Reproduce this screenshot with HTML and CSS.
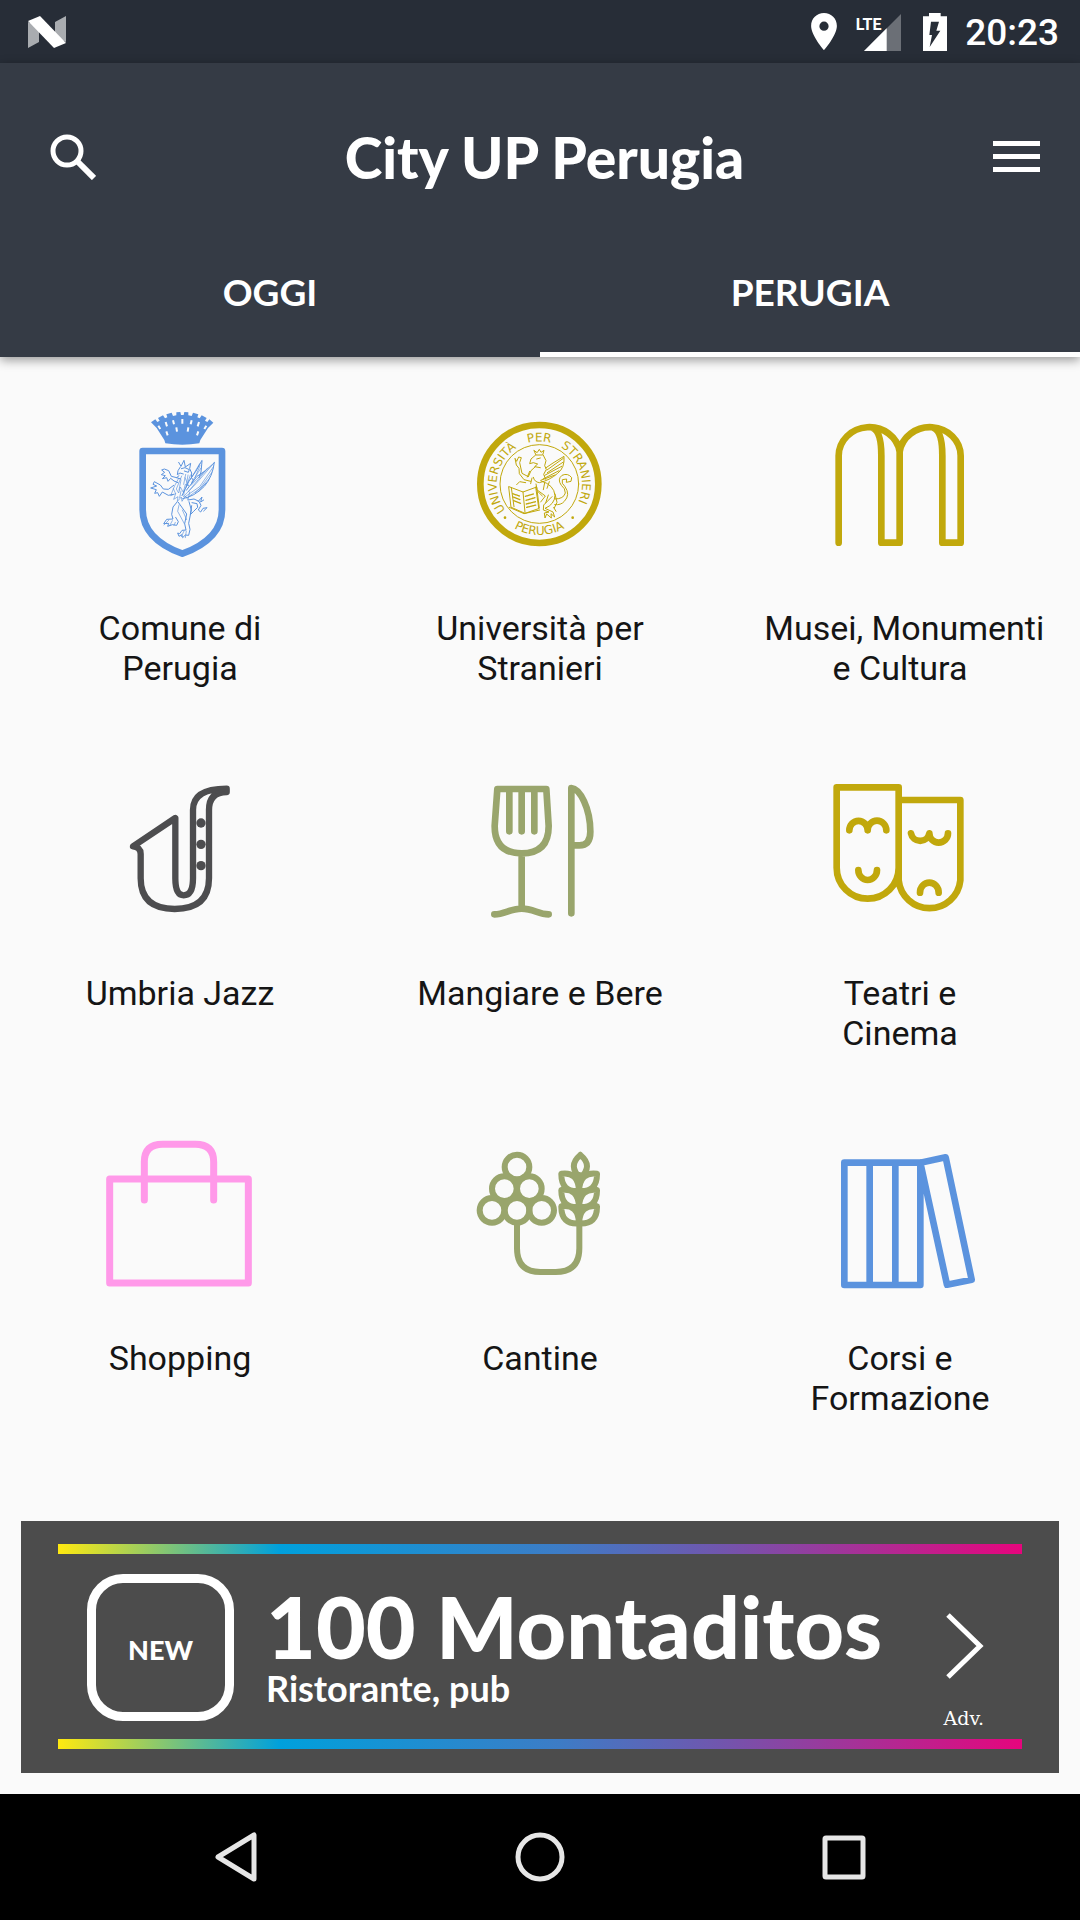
FILE: index.html
```html
<!DOCTYPE html>
<html lang="it">
<head>
<meta charset="utf-8">
<meta name="viewport" content="width=device-width, initial-scale=1">
<title>City UP Perugia</title>
<link rel="stylesheet" href="styles.css">
</head>
<body>
<div class="status">
  <svg class="status-logo" viewBox="0 0 38 32" width="38" height="32" aria-hidden="true">
    <path d="M0 6v26l11-6V10zM38 0v26l-11-5V6z" fill="#a9acb0"/>
    <path d="M0 5 12 0 38 27 26 32z" fill="#fff"/>
  </svg>
  <div class="status-right">
    <svg viewBox="90 39 78 112" width="26" height="37" aria-hidden="true">
      <path fill="#fff" fill-rule="evenodd" d="M129 39c-22 0-39 17-39 39 0 29 39 73 39 73s39-44 39-73c0-22-17-39-39-39zm0 26a14 14 0 1 1 0 28 14 14 0 0 1 0-28z"/>
    </svg>
    <svg class="signal" viewBox="225 36 138 114" width="46" height="38" aria-label="LTE">
      <path d="M360 39v111H249z" fill="#6b6f76"/>
      <path d="M317 82v68H249z" fill="#fff"/>
      <path d="M225 36h73v54h-73z" fill="#272d37"/>
      <text x="224" y="86" class="lte">LTE</text>
    </svg>
    <svg class="battery" viewBox="426 36 72 114" width="24" height="38" aria-hidden="true">
      <path d="M426 46h18V36h35v10h19v104h-72z" fill="#fff"/>
      <path d="M450 62h24l-8 27h12l-32 49 7-36h-8z" fill="#272d37"/>
    </svg>
    <time>20:23</time>
  </div>
</div>

<header class="header">
  <div class="toolbar">
    <button class="icon-button" aria-label="Cerca">
      <svg viewBox="0 0 46 46" width="46" height="46"><circle cx="17" cy="17" r="14" fill="none" stroke="#fff" stroke-width="5"/><path d="M27 27 44 44" fill="none" stroke="#fff" stroke-width="6"/></svg>
    </button>
    <h1>City UP Perugia</h1>
    <button class="icon-button" aria-label="Menu">
      <svg viewBox="0 0 47 32" width="47" height="32"><path d="M0 0h47v5H0zM0 13h47v5H0zM0 26h47v5H0z" fill="#fff"/></svg>
    </button>
  </div>
  <nav class="tabs">
    <a class="tab" href="#oggi">OGGI</a>
    <a class="tab tab-active" href="#perugia" aria-current="page">PERUGIA</a>
  </nav>
</header>

<main>
  <div class="grid">
    <a class="item blue" href="#comune">
      <svg class="icon" viewBox="-90 -21 540 540">
        <path class="fill" d="M93 67L106 58L112 66L119 62L114 54L129 46L135 55L142 52L139 43L155 38L159 48L169 46V37L181 36L183 45H191L193 36L205 37V46L215 48L219 38L235 43L232 52L239 55L245 46L260 54L255 62L262 66L268 58L280 68L264 84L241 120L238 130Q187 138 136 130L133 120L110 84Z"/>
        <path d="M115 77l6 10M137 66l4 13M159 61l3 12M187 57v14M215 61l-3 12M237 66l-4 13M259 77l-6 10M139 94l4 12M169 82l2 13M205 82l-2 13M235 94l-4 12" fill="none" stroke="#fafafa" stroke-width="6"/>
        <path class="line" stroke-width="20" d="M68 153H306V329Q306 417 187 461Q68 417 68 329Z"/>
        <g class="line" stroke-width="2">
          <path stroke-width="3" d="M176 187l7 12 9-18 4 20 16-11-3 16 6 13-1 13 6 9-4 8M181 201l-7 11-2 12 8-5 10 3M177 227l-7 6 12 4M184 206l11-3 13 6-3 8-12-4"/>
          <path stroke-width="3" d="M246 181q-17 34-39 62l-21 44M283 187q-5 43-30 72-30 31-65 37M282 189q-25 26-51 40l-32 42M246 184l-3 32-6 17"/>
          <path d="M276 196l-48 55-38 39M279 202l-40 58-45 31M275 218l-35 47-34 25M268 236l-32 38M258 249l-32 29M263 204l-50 52M256 213l-51 62M240 197l-15 36M243 204l-28 43M239 191l-28 48"/>
          <path stroke-width="3" d="M170 233l-16-4-8-17-13-5-8 3 9 7-10 7 12 3-9 9 13-3 4 11 8-9 10 8 12 5M161 256l-16 12-15-1-9-12-18-10-4 8 11 5-18 6 17 5-5 11 9-2 5 11 9-13 18 10 15-3"/>
          <path d="M176 235l-12 22-12 30 15-6-6 17 13-8-2 14 12-13 2 13 10-16 8 11 5-23M185 228l-16 39 7 12 5-18 9 16 6-24 10 5-11-25M197 223l-6 30M204 225l-6 37M183 240l-6 30M211 225l-12 36M160 266l7 15M183 273l-4 20M194 269l-3 16"/>
          <path stroke-width="3" d="M172 305l-13 16-4 22 4 14-19 1-9 13 15-1-3 9 14-5 13 2 5-11-8-13M175 307l25 35-6 29 4 19-12 1-7 10-6-2 4 10 8-5 3 9 8-8 10 1 4-18-4-18 8-40-7-25"/>
          <path d="M177 315l-4 19 20 37M187 330l13 29M192 393l-8 17M199 393l-3 20M146 361l-14 14M157 362l-8 15M166 367l-4 9"/>
          <path stroke-width="3" d="M204 300l18-3 15 7 6 12-8 14 7 6 7-11 12-2-10 10M216 308l15 3 2 11-12 12-10 10 4-27M235 304l11-13-4 15 9-6"/>
        </g>
      </svg>
      <span class="label">Comune di<br>Perugia</span>
    </a>
    <a class="item gold" href="#universita">
      <svg class="icon" viewBox="-45 -51 540 540">
        <defs>
          <path id="arc-top" d="M138 318A128 128 0 1 1 308 318"/>
          <path id="arc-bottom" d="M94 304A153 153 0 0 0 352 304"/>
        </defs>
        <circle class="line" cx="223" cy="222" r="177" stroke-width="20"/>
        <circle class="line" cx="223" cy="222" r="118" stroke-width="3"/>
        <text class="seal"><textPath href="#arc-top" startOffset="23">UNIVERSITÀ</textPath></text>
        <text class="seal"><textPath href="#arc-top" startOffset="274">PER</textPath></text>
        <text class="seal"><textPath href="#arc-top" startOffset="376">STRANIERI</textPath></text>
        <text class="seal"><textPath href="#arc-bottom" startOffset="50%" text-anchor="middle">PERUGIA</textPath></text>
        <circle class="fill" cx="120" cy="323" r="4"/><circle class="fill" cx="323" cy="323" r="4"/>
        <g class="line" stroke-width="3">
          <path d="M207 122l6 13h20l4-14-9 6-5-9-6 9zM212 135l-14 12-4 14 11-3 13 4-9 8 17 3M235 136l8 16-4 15 5 11-8 15 6 15M215 147l11-3M211 170l-13 12-8 18"/>
          <path d="M242 174l22-15 33-20q3 34-19 51-24 21-55 28-15-2-18-16M295 145l-49 35M295 156l-48 32M290 169l-51 27M282 182l-48 25M270 195l-43 16"/>
          <path d="M188 199l-17-9-7-32 5-15-8-2-6 13-5-9 4 20 8 10 1 16 14 18 20 5M182 218l-18-3-9 9M201 204l-4 17M213 222l3 15M194 184l-7 17"/>
          <path d="M132 230l42 16 41-15 8 64-43 15-41-18zM174 246l6 61M139 233l8 57M133 292l44 19 47-11M212 231l9 62"/>
          <path d="M143 251l20 7M144 261l21 8M146 272l21 8M181 259l24-7M183 271l27-8M184 282l28-7M185 292l28-7" stroke-width="4" stroke-dasharray="4 2"/>
          <path d="M229 213q38 12 41 43-1 27-30 39l24 11 5 15-11-10 1 13-14-12-5 12-2-15 14-3-17-6 1-15 25-25M214 238l27 20-14 18M253 215l-7 20M239 218l-4 21M270 252l6 25-8 17M218 244l14 14M250 255l-8 24M266 292l7 12"/>
          <path d="M270 267q26 0 31-18 0-14-12-23-13-18 2-30 18-8 29 7l-2 11-14 3 1-10-13 2q-4 11 8 21 17 24-2 44-10 12-29 10"/>
        </g>
      </svg>
      <span class="label">Università per<br>Stranieri</span>
    </a>
    <a class="item gold" href="#musei">
      <svg class="icon" viewBox="-30 -51 540 540">
        <path class="line" stroke-width="20" d="M56 398V137A92 86 0 0 1 239 125A92 86 0 0 1 422 137V398H367V137Q367 62 339 53M239 121V398H184V137Q184 62 156 53"/>
      </svg>
      <span class="label">&nbsp;Musei, Monumenti<br>e Cultura</span>
    </a>
    <a class="item dark" href="#jazz">
      <svg class="icon" viewBox="-90 -36 540 540">
        <path class="line" stroke-width="19" d="M39 229L166 144V325Q166 376 191 376Q219 376 219 325V120Q219 56 320 56V66Q267 66 267 120V325Q267 417 164 417Q62 417 62 325V252Q62 231 39 229Z"/>
        <path class="line" stroke-width="9" d="M290 67q10-5 21-6"/>
        <g class="fill"><circle cx="243" cy="159" r="14"/><circle cx="243" cy="223" r="14"/><circle cx="243" cy="287" r="14"/></g>
      </svg>
      <span class="label">Umbria Jazz</span>
    </a>
    <a class="item olive" href="#mangiare">
      <svg class="icon" viewBox="-90 -36 540 540">
        <path class="line" stroke-width="20" d="M52 57H199L206 168Q206 250 125 250Q44 250 44 168ZM88 57V184M125 57V184M163 57V184M125 250V415M43 433C75 433 90 416 125 416S175 433 206 433M274 430V54C300 56 331 115 331 185Q331 226 298 226H274"/>
      </svg>
      <span class="label">Mangiare e Bere</span>
    </a>
    <a class="item gold" href="#teatri">
      <svg class="icon" viewBox="-30 -36 540 540">
        <path class="line" stroke-width="20" d="M50 52H236V293A93 93 0 0 1 50 293ZM236 90H421V331A93 93 0 0 1 236 331V290M88 181A27 28 0 0 1 143 181A27 28 0 0 1 199 181M115 300A28 30 0 0 0 171 300M273 190A28 28 0 0 0 328 190A28 28 0 0 0 384 190M300 368A28 30 0 0 1 356 368"/>
      </svg>
      <span class="label">Teatri e<br>Cinema</span>
    </a>
    <a class="item pink" href="#shopping">
      <svg class="icon" viewBox="0 9 540 540">
        <path class="line" stroke-width="21" d="M59 177H475V489H59ZM163 240V126Q163 73 218 73H316Q371 73 371 126V240"/>
      </svg>
      <span class="label">Shopping</span>
    </a>
    <a class="item olive" href="#cantine">
      <svg class="icon" viewBox="-45 -51 540 540">
        <g class="line" stroke-width="18">
          <circle cx="156" cy="81" r="37"/><circle cx="118" cy="146" r="37"/><circle cx="193" cy="146" r="37"/>
          <circle cx="81" cy="211" r="37"/><circle cx="156" cy="211" r="37"/><circle cx="230" cy="211" r="37"/>
          <path d="M156 252V325Q156 396 226 396H272Q343 396 343 325V105M346 45Q307 78 346 113Q386 78 346 45M342 153Q288 157 289 101Q340 94 342 153Q345 94 396 101Q397 157 342 153M342 201Q288 205 289 150Q340 143 342 201Q345 143 396 150Q397 205 342 201M342 250Q288 254 289 199Q340 192 342 250Q345 192 396 199Q397 254 342 250"/>
        </g>
      </svg>
      <span class="label">Cantine</span>
    </a>
    <a class="item blue" href="#corsi">
      <svg class="icon" viewBox="-30 -51 540 540">
        <path class="line" stroke-width="20" d="M73 68H301V435H73ZM149 68V435M226 68V435M301 68L377 52L455 419L381 434Z"/>
      </svg>
      <span class="label">Corsi e<br>Formazione</span>
    </a>
  </div>

  <a class="ad" href="#montaditos">
    <span class="rainbow"></span>
    <span class="ad-body">
      <span class="badge">NEW</span>
      <span class="ad-text">
        <strong>100 Montaditos</strong>
        <span class="ad-sub">Ristorante, pub</span>
      </span>
      <span class="ad-end">
        <svg viewBox="0 0 40 68" width="40" height="68" aria-hidden="true"><path d="M4 3 36 34 4 65" fill="none" stroke="#fff" stroke-width="5"/></svg>
        <small>Adv.</small>
      </span>
    </span>
    <span class="rainbow"></span>
  </a>
</main>

<footer class="navbar">
  <button aria-label="Indietro"><svg viewBox="0 0 50 52" width="50" height="52"><path d="M43 4V48L7 26Z"/></svg></button>
  <button aria-label="Home"><svg viewBox="0 0 50 52" width="50" height="52"><circle cx="25" cy="26" r="22"/></svg></button>
  <button aria-label="Recenti"><svg viewBox="0 0 50 52" width="50" height="52"><rect x="6" y="7" width="38" height="39" rx="1"/></svg></button>
</footer>
</body>
</html>
```
FILE: styles.css
```css
* { box-sizing: border-box; }

body {
  margin: 0;
  min-height: 100vh;
  display: flex;
  flex-direction: column;
  background: #fafafa;
  color: #151515;
  font-family: Roboto, sans-serif;
}

a { color: inherit; text-decoration: none; }

button {
  margin: 0;
  padding: 0;
  border: 0;
  background: none;
}

svg { display: block; }

.status {
  height: 63px;
  padding: 0 21px 0 28px;
  display: flex;
  align-items: center;
  justify-content: space-between;
  background: #272d37;
  color: #fff;
}

.status-right {
  display: flex;
  align-items: center;
}

.signal { margin-left: 19px; }
.battery { margin: 0 18px 0 21px; }

.lte {
  fill: #fff;
  font: 700 48px "Liberation Sans Narrow", Roboto, sans-serif;
}

.status time {
  padding-top: 2px;
  font-size: 37px;
  font-weight: 500;
  line-height: 40px;
}

.header {
  position: relative;
  background: #353b45;
  color: #fff;
  font-family: Lato, sans-serif;
  box-shadow: 0 3px 10px rgba(0, 0, 0, 0.4);
}

.toolbar {
  height: 188px;
  padding: 0 40px 0 50px;
  display: flex;
  align-items: center;
  justify-content: space-between;
}

h1 {
  margin: 0;
  font-size: 57px;
  font-weight: 900;
  line-height: 64px;
}

.tabs {
  display: grid;
  grid-template-columns: 1fr 1fr;
}

.tab {
  height: 106px;
  padding-top: 19px;
  text-align: center;
  font-size: 37px;
  font-weight: 700;
  line-height: 44px;
}

.tab-active { border-bottom: 5px solid #fff; }

main { flex: 1; }

.grid {
  display: grid;
  grid-template-columns: repeat(3, 1fr);
  padding-top: 36px;
}

.item {
  min-height: 365px;
  display: flex;
  flex-direction: column;
  align-items: center;
  gap: 35px;
}

.icon {
  width: 180px;
  height: 180px;
}

.line {
  fill: none;
  stroke: currentColor;
  stroke-linecap: round;
  stroke-linejoin: round;
}

.fill { fill: currentColor; }

.seal {
  fill: currentColor;
  font: 36px "DejaVu Sans", sans-serif;
}

.blue { color: #5b93de; }
.gold { color: #c1a80c; }
.dark { color: #4d4d4f; }
.olive { color: #99a56c; }
.pink { color: #ff99e9; }

.label {
  color: #151515;
  text-align: center;
  font-size: 34px;
  line-height: 40px;
}

.ad {
  margin: 33px 21px 21px;
  padding: 23px 37px 24px;
  display: block;
  background: #4c4c4c;
  color: #fff;
  font-family: Lato, sans-serif;
}

.rainbow {
  display: block;
  height: 10px;
  background: linear-gradient(90deg, #ffe910, #00a0dc 23%, #3d7cc6 52%, #7255ad 69%, #e6057d);
}

.ad-body {
  height: 185px;
  padding: 2px 38px 0 29px;
  display: flex;
  align-items: center;
}

.badge {
  width: 147px;
  height: 147px;
  border: 9px solid #fff;
  border-radius: 36px;
  display: flex;
  align-items: center;
  justify-content: center;
  padding-top: 4px;
  font-size: 27px;
  font-weight: 900;
}

.ad-text {
  margin-left: 32px;
  display: flex;
  flex-direction: column;
}

.ad-text strong {
  font-size: 86px;
  font-weight: 900;
  line-height: 80px;
}

.ad-sub {
  font-size: 36px;
  font-weight: 700;
  line-height: 44px;
}

.ad-end {
  margin-left: auto;
  padding-top: 48px;
  display: flex;
  flex-direction: column;
  align-items: center;
  gap: 24px;
}

.ad-end small {
  font: 19px/28px "DejaVu Serif", serif;
}

.navbar {
  height: 126px;
  padding: 0 211px;
  display: flex;
  align-items: center;
  justify-content: space-between;
  background: #000;
}

.navbar svg {
  fill: none;
  stroke: #e6e6e6;
  stroke-width: 5;
  stroke-linejoin: round;
}
```
